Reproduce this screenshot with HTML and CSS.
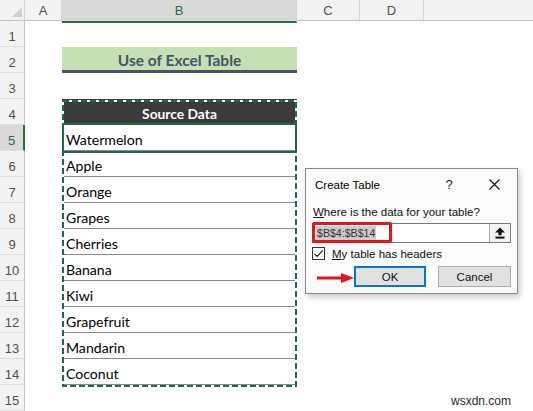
FILE: index.html
```html
<!DOCTYPE html>
<html>
<head>
<meta charset="utf-8">
<link rel="stylesheet" href="styles.css">
</head>
<body>
<div class="sheet">
  <div class="hdr">
    <div class="corner"><svg width="25" height="21" viewBox="0 0 25 21"><polygon points="12,17 22,17 22,7" fill="#cfcfcf"/></svg></div>
    <div class="ch">A</div>
    <div class="ch sel">B</div>
    <div class="ch">C</div>
    <div class="ch">D</div>
    <div class="ch rest"></div>
  </div>
  <div class="row"><div class="rh">1</div><div></div><div></div></div>
  <div class="row"><div class="rh">2</div><div></div><div class="title">Use of Excel Table</div></div>
  <div class="row"><div class="rh">3</div><div></div><div></div></div>
  <div class="row"><div class="rh">4</div><div></div><div class="thead">Source Data</div></div>
  <div class="row"><div class="rh active">5</div><div></div><div class="data">Watermelon</div></div>
  <div class="row"><div class="rh">6</div><div></div><div class="data">Apple</div></div>
  <div class="row"><div class="rh">7</div><div></div><div class="data">Orange</div></div>
  <div class="row"><div class="rh">8</div><div></div><div class="data">Grapes</div></div>
  <div class="row"><div class="rh">9</div><div></div><div class="data">Cherries</div></div>
  <div class="row"><div class="rh">10</div><div></div><div class="data">Banana</div></div>
  <div class="row"><div class="rh">11</div><div></div><div class="data">Kiwi</div></div>
  <div class="row"><div class="rh">12</div><div></div><div class="data">Grapefruit</div></div>
  <div class="row"><div class="rh">13</div><div></div><div class="data">Mandarin</div></div>
  <div class="row"><div class="rh">14</div><div></div><div class="data">Coconut</div></div>
  <div class="row"><div class="rh">15</div><div></div><div></div></div>
</div>

<svg class="marquee" width="235" height="287" viewBox="0 0 235 287">
  <rect x="1" y="1" width="233" height="285" fill="none" stroke="#ffffff" stroke-width="2"/>
  <rect x="1" y="1" width="233" height="285" fill="none" stroke="#1f6b43" stroke-width="2" stroke-dasharray="6 3"/>
</svg>
<div class="activecell"></div>

<div class="dialog">
  <div class="dtitle">
    <span class="dname">Create Table</span>
    <span class="help">?</span>
    <svg class="close" width="11" height="11" viewBox="0 0 11 11"><path d="M0.5 0.5 L10.5 10.5 M10.5 0.5 L0.5 10.5" stroke="#111" stroke-width="1.1" fill="none"/></svg>
  </div>
  <div class="dbody">
    <div class="dlabel"><u>W</u>here is the data for your table?</div>
    <div class="refbox">
      <div class="reftext"><span class="selrange">$B$4:$B$14</span></div>
      <div class="refbtn"><svg width="10" height="12" viewBox="0 0 10 12"><polygon points="0,5.5 5,0.5 10,5.5 6.6,5.5 6.6,8.2 3.4,8.2 3.4,5.5" fill="#111"/><rect x="0.5" y="9.6" width="9" height="2" fill="#111"/></svg></div>
      <div class="redbox"></div>
    </div>
    <div class="checkrow">
      <span class="check"><svg width="11" height="11" viewBox="0 0 11 11"><path d="M1.5 5.8 L4.2 8.5 L9.8 2.3" stroke="#222" stroke-width="1.2" fill="none"/></svg></span>
      <span class="clabel"><u>M</u>y table has headers</span>
    </div>
    <div class="btnrow">
      <div class="btn ok">OK</div>
      <div class="btn">Cancel</div>
    </div>
  </div>
  <svg class="redarrow" width="38" height="12" viewBox="0 0 38 12"><path d="M0 6 L27 6" stroke="#e3161b" stroke-width="3"/><polygon points="24,1 37,6 24,11" fill="#e3161b"/></svg>
</div>

<div class="watermark">wsxdn.com</div>
</body>
</html>
```

FILE: styles.css
```css
* { box-sizing: border-box; margin: 0; padding: 0; }

body {
  margin: 0;
  width: 533px;
  height: 411px;
  overflow: hidden;
  position: relative;
  background: #ffffff;
  font-family: "Liberation Sans", Arial, sans-serif;
}

.sheet { display: flex; flex-direction: column; }

.hdr, .row {
  display: grid;
  grid-template-columns: 25px 37px 235px 63px 64px 1fr;
}

.hdr {
  height: 21px;
  background: #f3f3f3;
  border-bottom: 1px solid #c4c4c4;
}

.corner { border-right: 1px solid #d4d4d4; }
.corner svg { display: block; }

.ch {
  border-right: 1px solid #d4d4d4;
  text-align: center;
  font-size: 13px;
  line-height: 21px;
  color: #505050;
}
.ch.sel {
  background: #d9d9d9;
  color: #217346;
  border-bottom: 2px solid #217346;
  margin-bottom: -1px;
}
.ch.rest { border-right: none; }

.row { height: 26px; }

.rh {
  background: #f3f3f3;
  border-right: 1px solid #c4c4c4;
  border-bottom: 1px solid #dedede;
  display: flex;
  align-items: flex-end;
  justify-content: center;
  padding-bottom: 1px;
  font-size: 13px;
  line-height: 16px;
  color: #505050;
}
.rh.active {
  background: #d9d9d9;
  color: #217346;
  border-right: 2px solid #217346;
}

.title {
  background: #c6e0b4;
  border-bottom: 3px solid #44546a;
  display: flex;
  align-items: center;
  justify-content: center;
  font-family: Lato, "Liberation Sans", sans-serif;
  font-weight: 700;
  font-size: 15.5px;
  color: #44546a;
  padding-top: 3px;
}

.thead {
  background: #3b3b3b;
  display: flex;
  align-items: center;
  justify-content: center;
  font-family: Lato, "Liberation Sans", sans-serif;
  font-weight: 700;
  font-size: 13.8px;
  color: #ffffff;
  padding-top: 3px;
}

.data {
  margin: 0 2px;
  border-bottom: 1px solid #8a8a8a;
  display: flex;
  align-items: flex-end;
  padding: 0 0 2px 2px;
  font-family: Lato, "Liberation Sans", sans-serif;
  font-size: 14.1px;
  line-height: 16px;
  color: #000;
}

.marquee {
  position: absolute;
  left: 62px;
  top: 100px;
}

.activecell {
  position: absolute;
  left: 62px;
  top: 123px;
  width: 235px;
  height: 30px;
  border: 2px solid #1f6b43;
}

.dialog {
  position: absolute;
  left: 305px;
  top: 168px;
  width: 213px;
  height: 126px;
  background: #fbfbfb;
  border: 1px solid #8a8a8a;
  box-shadow: 2px 3px 6px rgba(0, 0, 0, 0.22);
  font-family: "Liberation Sans", Arial, sans-serif;
  color: #000;
}

.dtitle {
  height: 31px;
  display: flex;
  align-items: center;
  padding: 0 0 0 9px;
  font-size: 11.5px;
}
.dname { flex: 1; }
.help { width: 14px; text-align: center; font-size: 13px; margin-right: 33px; color: #222; }
.close { margin-right: 17px; }

.dbody {
  display: flex;
  flex-direction: column;
  padding: 0 6px;
}

.dlabel {
  font-size: 11.5px;
  line-height: 16px;
  padding-top: 4px;
  height: 23px;
  padding-left: 1px;
  color: #111;
}

.refbox {
  position: relative;
  height: 20px;
  border: 1px solid #7a7a7a;
  background: #ffffff;
  display: flex;
}
.reftext {
  flex: 1;
  display: flex;
  align-items: center;
  padding-left: 3px;
}
.selrange {
  background: #cccccc;
  color: #333;
  font-size: 10.6px;
  line-height: 14px;
  padding: 0 1px;
}
.refbtn {
  width: 21px;
  border-left: 1px solid #adadad;
  background: #f4f4f4;
  display: flex;
  align-items: center;
  justify-content: center;
}
.refbtn svg { display: block; }

.redbox {
  position: absolute;
  left: -1px;
  top: -2px;
  width: 80px;
  height: 21px;
  border: 3px solid #e3161b;
  border-radius: 2px;
}

.checkrow {
  margin-top: 4px;
  height: 13px;
  display: flex;
  align-items: center;
}
.check {
  width: 13px;
  height: 13px;
  border: 1px solid #333;
  background: #fff;
  display: flex;
  align-items: center;
  justify-content: center;
}
.check svg { display: block; }
.clabel {
  margin-left: 7px;
  font-size: 11.5px;
  color: #111;
}

.btnrow {
  margin-top: 6px;
  display: flex;
  justify-content: flex-end;
  gap: 12px;
}
.btn {
  width: 73px;
  height: 21px;
  background: #e1e1e1;
  border: 1px solid #adadad;
  display: flex;
  align-items: center;
  justify-content: center;
  font-size: 11.5px;
  color: #111;
}
.btn.ok {
  width: 72px;
  border: 2px solid #0078d7;
}

.redarrow {
  position: absolute;
  left: 11px;
  top: 103px;
}

.watermark {
  position: absolute;
  right: 22px;
  top: 394px;
  font-size: 12px;
  color: #2a2a2a;
  font-family: "Liberation Sans", Arial, sans-serif;
}
```
